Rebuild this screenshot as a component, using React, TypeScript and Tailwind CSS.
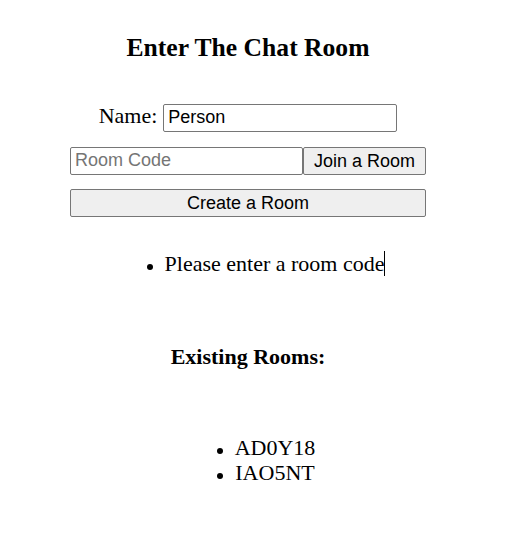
function Bullet() {
  return (
    <span className="relative inline-block w-0 h-[25px] align-top">
      <span className="absolute -left-[18px] top-[13px] w-[6px] h-[6px] rounded-full bg-black" />
    </span>
  )
}

export default function App() {
  const rooms = ["AD0Y18", "IAO5NT"]

  return (
    <div className="w-[496px] flex flex-col items-center bg-white text-black font-['Liberation_Serif',_serif]">
      <h2 className="mt-[33px] text-[25.6px] leading-[30px] font-bold">Enter The Chat Room</h2>

      {/* Name */}
      <div className="mt-[40px] flex items-baseline gap-[6px] text-[22px] leading-[25px]">
        <span>Name:</span>
        <input
          defaultValue="Person"
          className="w-[234px] h-[28px] px-[4px] border border-[#767676] rounded-[2px] font-['Liberation_Sans',_sans-serif] text-[18px] text-black outline-none"
        />
      </div>

      {/* Join */}
      <div className="mt-[15px] flex w-[356px] font-['Liberation_Sans',_sans-serif] text-[18px]">
        <input
          placeholder="Room Code"
          className="w-[233px] h-[28px] px-[4px] border border-[#767676] rounded-[2px] placeholder:text-[#757575] outline-none"
        />
        <button className="flex-1 h-[28px] bg-[#efefef] border border-[#767676] rounded-[2px] text-black">Join a Room</button>
      </div>

      <button className="mt-[14px] w-[356px] h-[28px] bg-[#efefef] border border-[#767676] rounded-[2px] font-['Liberation_Sans',_sans-serif] text-[18px]">
        Create a Room
      </button>

      <ul className="mt-[34px] self-stretch pl-[54px] text-center text-[22px] leading-[25px]">
        <li>
          <Bullet />
          Please enter a room code<span className="inline-block w-px h-[25px] bg-black align-top" />
        </li>
      </ul>

      <h3 className="mt-[68px] text-[22px] leading-[25px] font-bold">Existing Rooms:</h3>

      <ul className="mt-[66px] self-stretch pl-[54px] text-center text-[22px] leading-[25px]">
        {rooms.map((r) => (
          <li key={r}>
            <Bullet />
            {r}
          </li>
        ))}
      </ul>
    </div>
  )
}
